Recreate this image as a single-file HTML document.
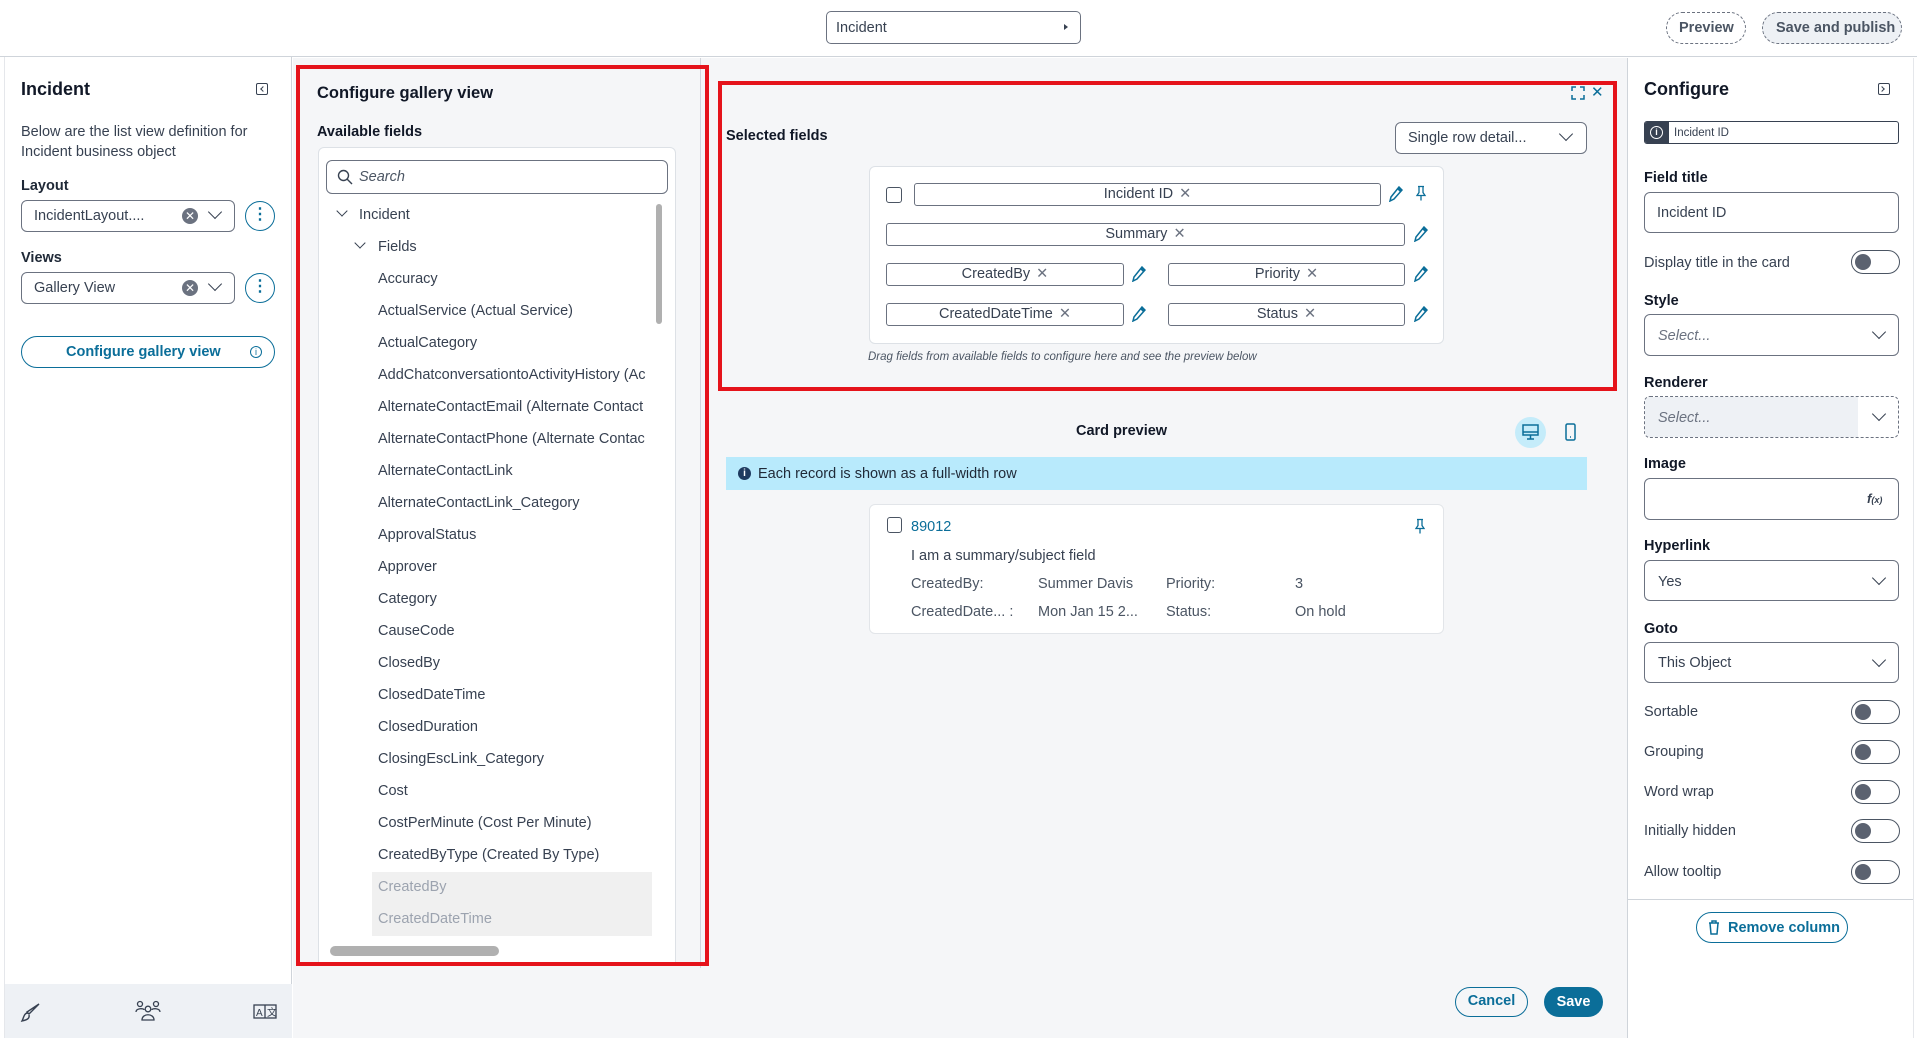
<!DOCTYPE html>
<html><head><meta charset="utf-8"><style>
*{box-sizing:border-box;margin:0;padding:0}
body{width:1917px;height:1038px;position:relative;overflow:hidden;background:#fff;font-family:"Liberation Sans",Arial,sans-serif;color:#1f2937;font-size:15px}
.a{position:absolute}
.t{position:absolute;white-space:nowrap;line-height:1}
.b{font-weight:bold}
.sel{position:absolute;border:1px solid #6b7280;border-radius:6px;background:#fff}
.chev{position:absolute;width:10px;height:10px;border-right:1.6px solid #374151;border-bottom:1.6px solid #374151;transform:rotate(45deg)}
.pill{position:absolute;height:23px;border:1px solid #6b7280;border-radius:3px;background:#fff;text-align:center;font-size:14.5px;line-height:21px;color:#374151}
.pill span{color:#6b7280;margin-left:6px}
.tog{position:absolute;width:49px;height:24px;border:1.5px solid #4b5563;border-radius:12px;background:#fff}
.tog:after{content:"";position:absolute;left:3px;top:3px;width:16px;height:16px;border-radius:50%;background:#5b6270}
.tree{position:absolute;left:378px;font-size:14.5px;color:#374151;white-space:nowrap}
</style></head><body>
<!-- top bar -->
<div class="a" style="left:0;top:0;width:1917px;height:57px;border-bottom:1px solid #cfd4da;background:#fff"></div>
<div class="sel" style="left:826px;top:11px;width:255px;height:33px;border-radius:5px"></div>
<div class="t" style="left:836px;top:21px;font-size:14.5px;color:#374151">Incident</div>
<div class="a" style="left:1064px;top:24px;border-left:4px solid #374151;border-top:3.5px solid transparent;border-bottom:3.5px solid transparent"></div>
<div class="a" style="left:1666px;top:12px;width:80px;height:32px;border:1px dashed #6b7280;border-radius:16px"></div>
<div class="t b" style="left:1679px;top:21px;font-size:14.5px;color:#4b5563">Preview</div>
<div class="a" style="left:1762px;top:12px;width:140px;height:32px;border:1px dashed #6b7280;border-radius:16px;background:#eef1f5"></div>
<div class="t b" style="left:1776px;top:21px;font-size:14.5px;color:#4b5563">Save and publish</div>

<!-- left panel -->
<div class="a" style="left:4px;top:57px;width:288px;height:981px;border-left:1px solid #e5e7eb;border-right:1px solid #cfd4da;background:#fff"></div>
<div class="a" style="left:5px;top:984px;width:287px;height:54px;background:#eef1f5"></div>
<div class="t b" style="left:21px;top:80px;font-size:18px;color:#111827">Incident</div>
<div class="a" style="left:256px;top:83px;width:12px;height:12px;border:1.3px solid #374151;border-radius:2px"></div>
<div class="a" style="left:261px;top:87px;width:4px;height:4px;border-left:1.3px solid #374151;border-bottom:1.3px solid #374151;transform:rotate(45deg)"></div>
<div class="t" style="left:21px;top:122px;font-size:14.5px;color:#374151;line-height:20px">Below are the list view definition for<br>Incident business object</div>
<div class="t b" style="left:21px;top:179px;font-size:14.5px">Layout</div>
<div class="sel" style="left:21px;top:200px;width:214px;height:32px"></div>
<div class="t" style="left:34px;top:209px;font-size:14.5px;color:#374151">IncidentLayout....</div>
<div class="a" style="left:182px;top:208px;width:16px;height:16px;border-radius:50%;background:#6b7280;color:#fff;font-size:12px;line-height:16px;text-align:center">✕</div>
<div class="chev" style="left:210px;top:207px"></div>
<div class="a" style="left:245px;top:201px;width:30px;height:30px;border:1.5px solid #0b6e99;border-radius:50%;color:#0b6e99;text-align:center;font-weight:bold;font-size:16px;line-height:26px">⋮</div>
<div class="t b" style="left:21px;top:251px;font-size:14.5px">Views</div>
<div class="sel" style="left:21px;top:272px;width:214px;height:32px"></div>
<div class="t" style="left:34px;top:281px;font-size:14.5px;color:#374151">Gallery View</div>
<div class="a" style="left:182px;top:280px;width:16px;height:16px;border-radius:50%;background:#6b7280;color:#fff;font-size:12px;line-height:16px;text-align:center">✕</div>
<div class="chev" style="left:210px;top:279px"></div>
<div class="a" style="left:245px;top:273px;width:30px;height:30px;border:1.5px solid #0b6e99;border-radius:50%;color:#0b6e99;text-align:center;font-weight:bold;font-size:16px;line-height:26px">⋮</div>
<div class="a" style="left:21px;top:336px;width:254px;height:32px;border:1.5px solid #0b6e99;border-radius:16px"></div>
<div class="t b" style="left:66px;top:345px;font-size:14.5px;color:#0b6e99">Configure gallery view</div>
<div class="a" style="left:250px;top:346px;width:12px;height:12px;border:1.3px solid #0b6e99;border-radius:50%;font-size:9px;color:#0b6e99;text-align:center;line-height:10px">i</div>
<svg class="a" style="left:20px;top:1001px" width="22" height="22" viewBox="0 0 22 22" fill="none" stroke="#374151" stroke-width="1.4"><path d="M19 3 L9 13 L7 11 Z M8 12 C4 12 4 16 2 20 C6 19 10 18 9 14"/></svg>
<svg class="a" style="left:135px;top:1000px" width="26" height="22" viewBox="0 0 26 22" fill="none" stroke="#374151" stroke-width="1.3"><circle cx="5" cy="4" r="2.5"/><circle cx="21" cy="4" r="2.5"/><circle cx="13" cy="9" r="2.8"/><path d="M1 12 C1 8 9 8 9 10 M25 12 C25 8 17 8 17 10 M7 20 C7 13 19 13 19 20 Z"/></svg>
<svg class="a" style="left:253px;top:1004px" width="24" height="15" viewBox="0 0 24 15" fill="none" stroke="#374151" stroke-width="1.3"><rect x="1" y="1" width="22" height="13"/><line x1="12" y1="1" x2="12" y2="14"/><text x="3" y="12" font-size="10" fill="#374151" stroke="none" font-family="Liberation Sans">A</text><text x="14" y="12" font-size="10" fill="#374151" stroke="none" font-family="Liberation Sans">文</text></svg>

<!-- middle -->
<div class="a" style="left:293px;top:58px;width:1334px;height:980px;background:#f5f6f8"></div>
<div class="a" style="left:700px;top:58px;width:1px;height:910px;background:#d1d5db"></div>
<!-- available fields panel -->
<div class="t b" style="left:317px;top:85px;font-size:16.5px;color:#111827">Configure gallery view</div>
<div class="t b" style="left:317px;top:125px;font-size:14.5px;color:#111827">Available fields</div>
<div class="a" style="left:318px;top:147px;width:358px;height:819px;border:1px solid #dde1e6;border-radius:6px 6px 0 0;background:#fff"></div>
<div class="a" style="left:326px;top:160px;width:342px;height:34px;border:1px solid #6b7280;border-radius:6px;background:#fff"></div>
<svg class="a" style="left:337px;top:169px" width="16" height="16" viewBox="0 0 16 16" fill="none" stroke="#374151" stroke-width="1.4"><circle cx="6.5" cy="6.5" r="5"/><line x1="10" y1="10" x2="15" y2="15"/></svg>
<div class="t" style="left:359px;top:170px;font-size:14.5px;font-style:italic;color:#4b5563">Search</div>
<div class="a" style="left:656px;top:204px;width:6px;height:120px;border-radius:3px;background:#b0b0b0"></div>
<div class="chev" style="left:338px;top:207px;width:8px;height:8px;border-width:1.3px"></div>
<div class="tree" style="left:359px;top:207px">Incident</div>
<div class="chev" style="left:356px;top:239px;width:8px;height:8px;border-width:1.3px"></div>
<div class="tree" style="top:239px">Fields</div>
<div class="tree" style="top:271px">Accuracy</div>
<div class="tree" style="top:303px">ActualService (Actual Service)</div>
<div class="tree" style="top:335px">ActualCategory</div>
<div class="tree" style="top:367px;width:274px;overflow:hidden">AddChatconversationtoActivityHistory (Ac</div>
<div class="tree" style="top:399px;width:274px;overflow:hidden">AlternateContactEmail (Alternate Contact</div>
<div class="tree" style="top:431px;width:274px;overflow:hidden">AlternateContactPhone (Alternate Contac</div>
<div class="tree" style="top:463px">AlternateContactLink</div>
<div class="tree" style="top:495px">AlternateContactLink_Category</div>
<div class="tree" style="top:527px">ApprovalStatus</div>
<div class="tree" style="top:559px">Approver</div>
<div class="tree" style="top:591px">Category</div>
<div class="tree" style="top:623px">CauseCode</div>
<div class="tree" style="top:655px">ClosedBy</div>
<div class="tree" style="top:687px">ClosedDateTime</div>
<div class="tree" style="top:719px">ClosedDuration</div>
<div class="tree" style="top:751px">ClosingEscLink_Category</div>
<div class="tree" style="top:783px">Cost</div>
<div class="tree" style="top:815px">CostPerMinute (Cost Per Minute)</div>
<div class="tree" style="top:847px">CreatedByType (Created By Type)</div>
<div class="a" style="left:372px;top:872px;width:280px;height:64px;background:#f0f0f0"></div>
<div class="tree" style="top:879px;color:#9ca3af">CreatedBy</div>
<div class="tree" style="top:911px;color:#9ca3af">CreatedDateTime</div>
<div class="a" style="left:330px;top:946px;width:169px;height:10px;border-radius:5px;background:#b0b0b0"></div>
<div class="a" style="left:296px;top:65px;width:413px;height:901px;border:4px solid #e5131b"></div>

<!-- selected fields -->
<div class="a" style="left:718px;top:81px;width:899px;height:310px;border:4px solid #e5131b"></div>
<svg class="a" style="left:1571px;top:86px" width="14" height="14" viewBox="0 0 14 14" fill="none" stroke="#0b6e99" stroke-width="1.5"><path d="M1 5V1H5M9 1H13V5M13 9V13H9M5 13H1V9"/></svg>
<div class="t" style="left:1591px;top:85px;font-size:15px;color:#0b6e99">✕</div>
<div class="t b" style="left:726px;top:129px;font-size:14.5px;color:#111827">Selected fields</div>
<div class="sel" style="left:1395px;top:122px;width:192px;height:32px"></div>
<div class="t" style="left:1408px;top:131px;font-size:14.5px;color:#374151">Single row detail...</div>
<div class="chev" style="left:1561px;top:129px"></div>
<div class="a" style="left:869px;top:166px;width:575px;height:178px;border:1px solid #dde1e6;border-radius:6px;background:#fff"></div>
<div class="a" style="left:886px;top:187px;width:16px;height:16px;border:1.3px solid #4b5563;border-radius:3px"></div>
<div class="pill" style="left:914px;top:183px;width:467px">Incident ID<span>✕</span></div>
<div class="pill" style="left:886px;top:223px;width:519px">Summary<span>✕</span></div>
<div class="pill" style="left:886px;top:263px;width:238px">CreatedBy<span>✕</span></div>
<div class="pill" style="left:1168px;top:263px;width:237px">Priority<span>✕</span></div>
<div class="pill" style="left:886px;top:303px;width:238px">CreatedDateTime<span>✕</span></div>
<div class="pill" style="left:1168px;top:303px;width:237px">Status<span>✕</span></div>
<svg width="0" height="0" style="position:absolute"><defs><symbol id="pen" viewBox="0 0 14 16"><path d="M10 1 L13 4 L5 13 L1 15 L2 11 Z" fill="none" stroke="#0b6e99" stroke-width="1.5"/><path d="M10 1 L13 4 L11 6 L8 3 Z" fill="#0b6e99"/></symbol><symbol id="pin" viewBox="0 0 12 16"><path d="M3 1H9M4 1V7L2 10H10L8 7V1M6 10V15" fill="none" stroke="#0b6e99" stroke-width="1.3"/></symbol></defs></svg>
<svg class="a" style="left:1389px;top:186px" width="14" height="16"><use href="#pen"/></svg>
<svg class="a" style="left:1415px;top:185px" width="12" height="17"><use href="#pin"/></svg>
<svg class="a" style="left:1414px;top:226px" width="14" height="16"><use href="#pen"/></svg>
<svg class="a" style="left:1132px;top:266px" width="14" height="16"><use href="#pen"/></svg>
<svg class="a" style="left:1414px;top:266px" width="14" height="16"><use href="#pen"/></svg>
<svg class="a" style="left:1132px;top:306px" width="14" height="16"><use href="#pen"/></svg>
<svg class="a" style="left:1414px;top:306px" width="14" height="16"><use href="#pen"/></svg>
<div class="t" style="left:868px;top:352px;font-size:11.5px;font-style:italic;color:#4b5563">Drag fields from available fields to configure here and see the preview below</div>

<!-- card preview -->
<div class="t b" style="left:1076px;top:424px;font-size:14.5px;color:#111827">Card preview</div>
<div class="a" style="left:1515px;top:417px;width:31px;height:31px;border-radius:50%;background:#c5ecfa"></div>
<svg class="a" style="left:1522px;top:424px" width="17" height="17" viewBox="0 0 17 17" fill="none" stroke="#0b6e99" stroke-width="1.5"><rect x="1" y="1" width="15" height="10"/><line x1="1" y1="8" x2="16" y2="8"/><path d="M8.5 11V15M5 15H12"/></svg>
<svg class="a" style="left:1565px;top:423px" width="11" height="18" viewBox="0 0 11 18" fill="none" stroke="#0b6e99" stroke-width="1.5"><rect x="1" y="1" width="9" height="16" rx="1.5"/><line x1="5" y1="14" x2="6" y2="14"/></svg>
<div class="a" style="left:726px;top:457px;width:861px;height:33px;background:#b8eafc"></div>
<div class="a" style="left:738px;top:467px;width:13px;height:13px;border-radius:50%;background:#1e3a5f;color:#fff;font-size:10px;line-height:13px;text-align:center;font-weight:bold">i</div>
<div class="t" style="left:758px;top:467px;font-size:14.5px;color:#1f2937">Each record is shown as a full-width row</div>
<div class="a" style="left:869px;top:504px;width:575px;height:130px;border:1.5px solid #e2e5e9;border-radius:6px;background:#fff"></div>
<div class="a" style="left:887px;top:517px;width:15px;height:16px;border:1.3px solid #4b5563;border-radius:3px"></div>
<div class="t" style="left:911px;top:520px;font-size:14.5px;color:#0b6e99">89012</div>
<svg class="a" style="left:1414px;top:518px" width="12" height="17"><use href="#pin"/></svg>
<div class="t" style="left:911px;top:549px;font-size:14.5px;color:#374151">I am a summary/subject field</div>
<div class="t" style="left:911px;top:577px;font-size:14.5px;color:#4b5563">CreatedBy:</div>
<div class="t" style="left:1038px;top:577px;font-size:14.5px;color:#4b5563">Summer Davis</div>
<div class="t" style="left:1166px;top:577px;font-size:14.5px;color:#4b5563">Priority:</div>
<div class="t" style="left:1295px;top:577px;font-size:14.5px;color:#4b5563">3</div>
<div class="t" style="left:911px;top:605px;font-size:14.5px;color:#4b5563">CreatedDate... :</div>
<div class="t" style="left:1038px;top:605px;font-size:14.5px;color:#4b5563">Mon Jan 15 2...</div>
<div class="t" style="left:1166px;top:605px;font-size:14.5px;color:#4b5563">Status:</div>
<div class="t" style="left:1295px;top:605px;font-size:14.5px;color:#4b5563">On hold</div>
<div class="a" style="left:1455px;top:987px;width:73px;height:30px;border:1.5px solid #0b6e99;border-radius:15px;text-align:center;line-height:27px;font-weight:bold;font-size:14.5px;color:#0b6e99">Cancel</div>
<div class="a" style="left:1544px;top:987px;width:59px;height:30px;border-radius:15px;background:#0b6e99;text-align:center;line-height:30px;font-weight:bold;font-size:14.5px;color:#fff">Save</div>

<!-- right panel -->
<div class="a" style="left:1627px;top:58px;width:287px;height:980px;border-left:1px solid #cfd4da;border-right:1px solid #e5e7eb;background:#fff"></div>
<div class="a" style="left:1628px;top:899px;width:285px;height:1px;background:#cfd4da"></div>
<div class="t b" style="left:1644px;top:80px;font-size:18px;color:#111827">Configure</div>
<div class="a" style="left:1878px;top:83px;width:12px;height:12px;border:1.3px solid #374151;border-radius:2px"></div>
<div class="a" style="left:1880px;top:87px;width:4px;height:4px;border-right:1.3px solid #374151;border-top:1.3px solid #374151;transform:rotate(45deg)"></div>
<div class="a" style="left:1644px;top:121px;width:255px;height:23px;border:1px solid #374151;border-radius:3px;overflow:hidden"><div class="a" style="left:0;top:0;width:24px;height:23px;background:#374151"></div><div class="a" style="left:5px;top:4px;width:13px;height:13px;border:1.3px solid #fff;border-radius:50%;color:#fff;font-size:9px;line-height:11px;text-align:center;font-weight:bold">i</div><div class="t" style="left:29px;top:6px;font-size:11.5px;color:#374151">Incident ID</div></div>
<div class="t b" style="left:1644px;top:171px;font-size:14.5px;color:#111827">Field title</div>
<div class="sel" style="left:1644px;top:192px;width:255px;height:41px"></div>
<div class="t" style="left:1657px;top:206px;font-size:14.5px;color:#374151">Incident ID</div>
<div class="t" style="left:1644px;top:256px;font-size:14.5px;color:#374151">Display title in the card</div>
<div class="tog" style="left:1851px;top:250px"></div>
<div class="t b" style="left:1644px;top:294px;font-size:14.5px;color:#111827">Style</div>
<div class="sel" style="left:1644px;top:314px;width:255px;height:42px"></div>
<div class="t" style="left:1658px;top:329px;font-size:14.5px;font-style:italic;color:#6b7280">Select...</div>
<div class="chev" style="left:1874px;top:327px"></div>
<div class="t b" style="left:1644px;top:376px;font-size:14.5px;color:#111827">Renderer</div>
<div class="a" style="left:1644px;top:396px;width:255px;height:42px;border:1px dashed #6b7280;border-radius:6px;overflow:hidden"><div class="a" style="left:0;top:0;width:213px;height:42px;background:#eef1f5"></div></div>
<div class="t" style="left:1658px;top:411px;font-size:14.5px;font-style:italic;color:#6b7280">Select...</div>
<div class="chev" style="left:1874px;top:409px"></div>
<div class="t b" style="left:1644px;top:457px;font-size:14.5px;color:#111827">Image</div>
<div class="sel" style="left:1644px;top:478px;width:255px;height:42px"></div>
<div class="t" style="left:1867px;top:492px;font-size:13px;font-style:italic;font-weight:bold;color:#374151">f<span style="font-size:9px">(x)</span></div>
<div class="t b" style="left:1644px;top:539px;font-size:14.5px;color:#111827">Hyperlink</div>
<div class="sel" style="left:1644px;top:560px;width:255px;height:41px"></div>
<div class="t" style="left:1658px;top:575px;font-size:14.5px;color:#374151">Yes</div>
<div class="chev" style="left:1874px;top:573px"></div>
<div class="t b" style="left:1644px;top:622px;font-size:14.5px;color:#111827">Goto</div>
<div class="sel" style="left:1644px;top:642px;width:255px;height:41px"></div>
<div class="t" style="left:1658px;top:656px;font-size:14.5px;color:#374151">This Object</div>
<div class="chev" style="left:1874px;top:655px"></div>
<div class="t" style="left:1644px;top:705px;font-size:14.5px;color:#374151">Sortable</div><div class="tog" style="left:1851px;top:700px"></div>
<div class="t" style="left:1644px;top:745px;font-size:14.5px;color:#374151">Grouping</div><div class="tog" style="left:1851px;top:740px"></div>
<div class="t" style="left:1644px;top:785px;font-size:14.5px;color:#374151">Word wrap</div><div class="tog" style="left:1851px;top:780px"></div>
<div class="t" style="left:1644px;top:824px;font-size:14.5px;color:#374151">Initially hidden</div><div class="tog" style="left:1851px;top:819px"></div>
<div class="t" style="left:1644px;top:865px;font-size:14.5px;color:#374151">Allow tooltip</div><div class="tog" style="left:1851px;top:860px"></div>
<div class="a" style="left:1696px;top:912px;width:152px;height:31px;border:1.5px solid #0b6e99;border-radius:16px"></div>
<svg class="a" style="left:1708px;top:920px" width="12" height="15" viewBox="0 0 12 15" fill="none" stroke="#0b6e99" stroke-width="1.5"><path d="M1 3H11M4 3V1H8V3M2 3L3 14H9L10 3"/></svg>
<div class="t b" style="left:1728px;top:921px;font-size:14.5px;color:#0b6e99">Remove column</div>
</body></html>
